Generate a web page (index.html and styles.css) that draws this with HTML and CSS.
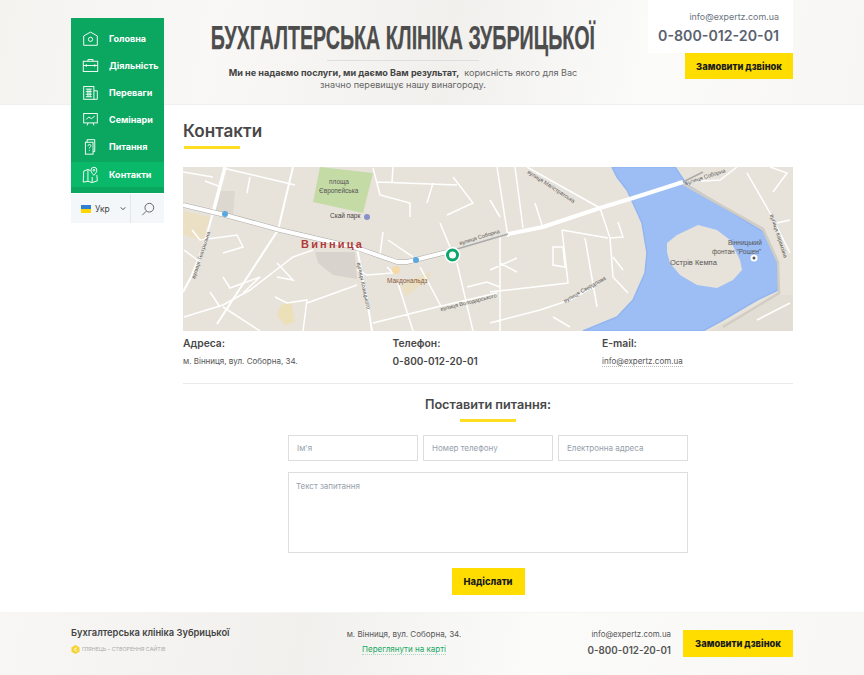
FILE: index.html
```html
<!DOCTYPE html>
<html lang="uk">
<head>
  <meta charset="UTF-8">
  <meta name="viewport" content="width=device-width, initial-scale=1.0">
  <title>Бухгалтерська клініка Зубрицької</title>
  <link rel="stylesheet" href="styles.css">
</head>
<body>
  <!-- Header -->
  <header class="site-header">
    <div class="wrap header-row">
      <div class="brand">
        <div class="brand-title"><span class="brand-name">Бухгалтерська клініка Зубрицької</span></div>
        <div class="brand-line"></div>
        <p class="brand-text"><b>Ми не надаємо послуги, ми даємо Вам результат,</b>&nbsp; корисність якого для Вас<br>значно перевищує нашу винагороду.</p>
      </div>
      <div class="header-contact">
        <div class="contact-box">
          <a class="contact-mail">info@expertz.com.ua</a>
          <div class="contact-phone">0-800-012-20-01</div>
        </div>
        <a class="btn btn-call">Замовити дзвінок</a>
      </div>
    </div>
  </header>

  <div class="wrap page">
    <!-- Side menu -->
    <aside class="sidebar">
      <nav class="side-nav">
        <a class="nav-item">
          <svg class="nav-icon" viewBox="0 0 20 20"><path d="M2 7 10 2.500 18 7V18H2z"/><circle cx="10" cy="11" r="2.500"/></svg>
          Головна
        </a>
        <a class="nav-item">
          <svg class="nav-icon" viewBox="0 0 20 20"><rect x="1.500" y="5" width="17" height="12"/><path d="M7 5V3h6v2M1.500 10h17M5 8.500v3M15 8.500v3"/></svg>
          Діяльність
        </a>
        <a class="nav-item">
          <svg class="nav-icon" viewBox="0 0 20 20"><rect x="2" y="3" width="12" height="15"/><path d="M14 8h4v10h-4M4.500 6h7M4.500 9h7M4.500 12h7M4.500 15h7M7 6v9M9.500 6v9"/></svg>
          Переваги
        </a>
        <a class="nav-item">
          <svg class="nav-icon" viewBox="0 0 20 20"><rect x="2" y="3" width="16" height="11"/><path d="M5 10l3-3 3 2 4-3M6 17l1-3M14 17l-1-3"/></svg>
          Семінари
        </a>
        <a class="nav-item">
          <svg class="nav-icon" viewBox="0 0 20 20"><path d="M6 5V2h9v14h-2"/><rect x="4" y="5" width="9" height="14"/><path d="M7 9.500c0-2.500 3.500-2.500 3.500-.5 0 1.500-1.800 1.500-1.800 3.200M8.700 14v1"/></svg>
          Питання
        </a>
        <a class="nav-item active">
          <svg class="nav-icon" viewBox="0 0 20 20"><path d="M2 6l5-2 3 1.500M7 4v14M2 6l-.5 13L7 18l5 1.500 6-2-.5-7M12 13v6.500"/><path d="M14 11s-3.500-3.500-3.500-6a3.500 3.500 0 0 1 7 0c0 2.500-3.500 6-3.500 6z"/><circle cx="14" cy="5" r="1"/></svg>
          Контакти
        </a>
      </nav>
      <div class="side-tools">
        <div class="lang">
          <span class="flag"></span>
          Укр
          <svg class="lang-arrow" viewBox="0 0 8 6"><path d="M1 1.500 4 4.500 7 1.500"/></svg>
        </div>
        <div class="search">
          <svg class="search-icon" viewBox="0 0 16 16"><circle cx="9.500" cy="6.500" r="5"/><path d="M6 10.500 1.500 15"/></svg>
        </div>
      </div>
    </aside>

    <!-- Main content -->
    <main class="content">
      <h1 class="page-title">Контакти</h1>

      <svg class="map" viewBox="0 0 610 164" preserveAspectRatio="none">
        <rect width="610" height="164" fill="#e8e3da"/>
        <polygon points="137,0 190,6 180,46 130,35" fill="#c5dba6"/>
        <polygon points="0,44 27,50 20,74 0,68" fill="#ebe0c3"/>
        <polygon points="36,24 52,24 50,50 32,46" fill="#dcd8d0"/>
        <polygon points="132,85 172,85 174,112 150,108 135,96" fill="#d8d4cd"/>
        <polygon points="98,138 108,135 112,155 102,158 94,148" fill="#ebe0b8"/>
        <polygon points="218,118 248,104 246,112 222,130" fill="#ebe0c3"/>
        <polygon class="water" points="429,0 492,0 504,18 534,36 582,66 594,93 595,123 574,133 540,153 520,164 400,164 434,150 450,133 462,106 464,86 459,56 450,36 444,23 434,10"/>
        <polygon points="484,76 494,68 515,58 534,63 547,73 557,93 559,103 550,113 534,121 514,118 497,108 487,96 484,85" fill="#e8e3da"/>
        <polygon points="526,164 595,128 610,128 610,164" fill="#e3ded5"/>
        <path class="road-edge" d="M495 14 534 36 580 62 595 95 596 126 540 160"/>
        <path class="road road-wide" d="M42 0 30 46"/>
        <path class="road" d="M30 46 20 80 8 110 0 125M110 0 95 63 67 106 34 157M174 81 184 133 189 164"/>
        <path class="road road-small" d="M0 5 30 10M22 14 38 20M40 1 112 18M67 10 64 26M190 1 197 28 227 36 227 50M210 0 209 16M194 15 274 18M270 10 290 36 264 48M250 16 244 36M257 56 267 80M274 96 290 164M205 73 230 90M200 65 197 88M174 103 184 108 210 106 204 100M214 113 230 164M237 100 260 143M124 136 174 118M1 150 40 138 67 123 97 100 110 90 130 83M94 96 110 113 94 110M92 130 104 136 124 133 120 164M40 110 47 121 77 110 60 126M27 125 37 140M9 63 17 73 54 68 60 80 40 86M1 83 17 95M190 156 254 140 314 126M40 140 77 164M284 120 304 115 317 120"/>
        <path class="road road-small" d="M314 0 325 70M332 0 340 61M352 36 359 58M307 33 317 50M417 41 427 71 440 70 435 55M379 63 425 71M379 63 385 116 307 125M402 71 414 140M427 71 430 110 445 126M430 90 440 103M370 80 380 80 382 100 370 98zM307 103 334 91M317 96 334 105M317 70 317 164M307 156 357 143 387 133 410 120M370 150 387 160M344 0 417 41M554 0 537 13 504 15M564 6 587 46 607 86M587 0 604 6 590 25M594 56 607 53M574 153 607 136"/>
        <path class="road-main-edge" d="M0 38 42 48 97 63 174 81 214 95 224 95 264 85"/>
        <path class="road-main" d="M0 38 42 48 97 63 174 81 214 95 224 95 264 85"/>
        <path class="road-thin" d="M264 85 325 67"/>
        <path class="road-main" d="M325 67 360 60 417 41 450 31 500 15"/>
        <path class="road-thin" d="M500 15 520 5"/>
        <circle cx="42" cy="47" r="3" fill="#5aa8e0"/>
        <circle cx="233" cy="93" r="3" fill="#5aa8e0"/>
        <circle cx="184" cy="50" r="3" fill="#8890c8"/>
        <circle cx="213" cy="103" r="4" fill="#f5d9a8"/>
        <circle cx="571" cy="91" r="3.500" fill="#fff"/>
        <circle cx="571" cy="91" r="1.500" fill="#555"/>
        <text class="map-label" x="146" y="17">площа</text>
        <text class="map-label" x="136" y="26">Європейська</text>
        <text class="map-label dark" x="147" y="51">Скай парк</text>
        <text class="map-city" x="118" y="81">Винница</text>
        <text class="map-label brown" x="204" y="116">Макдональдз</text>
        <text class="map-label small" transform="translate(12 112) rotate(-72)">вулиця Театральна</text>
        <text class="map-label small" transform="translate(174 96) rotate(78)">вулиця Козицького</text>
        <text class="map-label small" transform="translate(258 144) rotate(-14)">вулиця Володарського</text>
        <text class="map-label small" transform="translate(277 78) rotate(-17)">вулиця Соборна</text>
        <text class="map-label small" transform="translate(344 6) rotate(33)">вулиця Магістратська</text>
        <text class="map-label small" transform="translate(382 136) rotate(-30)">вулиця Свердлова</text>
        <text class="map-label small" transform="translate(503 18) rotate(-18)">вулиця Соборна</text>
        <text class="map-label small" transform="translate(587 48) rotate(72)">вулиця Карамзіна</text>
        <text class="map-label big" x="487" y="98">Острів Кемпа</text>
        <text class="map-label" x="545" y="78">Вінницький</text>
        <text class="map-label" x="529" y="87">фонтан "Рошен"</text>
        <circle class="map-halo" cx="269.500" cy="88" r="8"/>
        <circle class="map-pin" cx="269.500" cy="88" r="5"/>
      </svg>

      <div class="info-row">
        <div class="info-col">
          <div class="info-label">Адреса:</div>
          <div class="info-text">м. Вінниця, вул. Соборна, 34.</div>
        </div>
        <div class="info-col">
          <div class="info-label">Телефон:</div>
          <div class="info-phone">0-800-012-20-01</div>
        </div>
        <div class="info-col">
          <div class="info-label">E-mail:</div>
          <div class="info-text"><a class="info-mail">info@expertz.com.ua</a></div>
        </div>
      </div>

      <form class="ask-form">
        <h2 class="form-title">Поставити питання:</h2>
        <div class="form-fields">
          <div class="field-row">
            <input class="field" placeholder="Ім'я">
            <input class="field" placeholder="Номер телефону">
            <input class="field" placeholder="Електронна адреса">
          </div>
          <textarea class="field field-area" placeholder="Текст запитання"></textarea>
        </div>
        <a class="btn btn-send">Надіслати</a>
      </form>
    </main>
  </div>

  <!-- Footer -->
  <footer class="site-footer">
    <div class="wrap footer-row">
      <div class="footer-brand">
        <div class="footer-name">Бухгалтерська клініка Зубрицької</div>
        <div class="footer-dev">
          <svg class="dev-icon" viewBox="0 0 10 10"><path d="M5 0 9.500 2.500V7.500L5 10 .5 7.500V2.500z"/><path class="dev-mark" d="M6.500 3 3.500 5 6.500 7"/></svg>
          ГЛЯНЕЦЬ – СТВОРЕННЯ САЙТІВ
        </div>
      </div>
      <div class="footer-address">
        <div>м. Вінниця, вул. Соборна, 34.</div>
        <a class="footer-link">Переглянути на карті</a>
      </div>
      <div class="footer-contact">
        <a class="footer-mail">info@expertz.com.ua</a>
        <div class="footer-phone">0-800-012-20-01</div>
      </div>
      <a class="btn btn-footer">Замовити дзвінок</a>
    </div>
  </footer>
</body>
</html>
```

FILE: styles.css
```css
body {
  margin: 0;
  background: #fff;
  color: #444;
  font-family: "Inter", "Liberation Sans", sans-serif;
  font-size: 10px;
}

.wrap {
  width: 722px;
  margin-left: 71px;
}

.btn {
  display: flex;
  align-items: center;
  justify-content: center;
  background: #ffdd00;
  color: #1a1a1a;
  font-weight: 800;
}

/* Header */
.site-header {
  height: 105px;
  background: linear-gradient(100deg, #f4f3f0 0%, #f9f8f6 25%, #f1f0ed 52%, #fbfbfa 75%, #f7f6f4 100%);
  border-bottom: 1px solid #f0f0f0;
  box-sizing: border-box;
}

.header-row {
  display: flex;
}

.brand {
  width: 490px;
  margin-left: 87px;
  text-align: center;
}

.brand-title {
  display: flex;
  justify-content: center;
  margin-top: 18px;
  font-family: "Liberation Sans", sans-serif;
  font-size: 34px;
  line-height: 38px;
  font-weight: 700;
  text-transform: uppercase;
  white-space: nowrap;
  color: #4d4d4d;
}

.brand-name {
  flex: none;
  transform: scaleX(0.579);
  -webkit-text-stroke: 0.25px #4d4d4d;
}

.brand-line {
  width: 152px;
  height: 1px;
  margin: 4px auto 0;
  background: #dedede;
}

.brand-text {
  margin: 6px 0 0;
  font-size: 9.100px;
  line-height: 12px;
  color: #666;
}

.brand-text b {
  color: #444;
}

.header-contact {
  width: 145px;
  display: flex;
  flex-direction: column;
  align-items: flex-end;
}

.contact-box {
  width: 145px;
  height: 53px;
  box-sizing: border-box;
  padding: 10px 14px 0 0;
  background: #fff;
  text-align: right;
}

.contact-mail {
  font-size: 8.900px;
  line-height: 12px;
  color: #6b7480;
}

.contact-phone {
  margin-top: 3px;
  font-size: 14.200px;
  line-height: 20px;
  font-weight: 600;
  color: #5a626e;
}

.btn-call {
  width: 108px;
  height: 26px;
  font-size: 9.300px;
}

/* Page */
.page {
  position: relative;
  padding-left: 112px;
  box-sizing: border-box;
}

.sidebar {
  position: absolute;
  left: 0;
  top: -87px;
  width: 93px;
}

.side-nav {
  display: flex;
  flex-direction: column;
  background: #0ba660;
  padding: 7px 0 6px;
}

.nav-item {
  height: 27px;
  display: flex;
  align-items: center;
  padding-left: 11px;
  color: #fff;
  font-size: 9px;
  font-weight: 700;
}

.nav-item.active {
  background: #09b969;
  height: 25px;
  margin-top: 2px;
}

.nav-icon {
  width: 17px;
  height: 17px;
  margin-right: 10px;
  fill: none;
  stroke: #fff;
  stroke-width: 1.100;
}

.side-tools {
  display: flex;
  height: 29px;
  margin-top: 1px;
  background: #f4f7fa;
}

.lang {
  width: 60px;
  display: flex;
  align-items: center;
  padding-left: 10px;
  box-sizing: border-box;
  border-right: 1px solid #e3e6ea;
  font-size: 8.500px;
  color: #444;
}

.flag {
  width: 10px;
  height: 8px;
  margin-right: 4px;
  background: linear-gradient(#2f7fd6 50%, #ffd500 50%);
}

.lang-arrow {
  width: 6px;
  height: 5px;
  margin-left: 10px;
  fill: none;
  stroke: #444;
  stroke-width: 1.300;
}

.search {
  flex: 1;
  display: flex;
  align-items: center;
  justify-content: center;
}

.search-icon {
  width: 14px;
  height: 14px;
  fill: none;
  stroke: #555;
  stroke-width: 1;
}

/* Content */
.content {
  padding-top: 15px;
}

.page-title {
  margin: 0;
  font-size: 17.100px;
  line-height: 22px;
  font-weight: 600;
  color: #484848;
}

.page-title::after {
  content: "";
  display: block;
  width: 56px;
  height: 3px;
  margin: 4px 0 0 1px;
  background: #ffdd22;
}

.map {
  display: block;
  width: 610px;
  height: 164px;
  margin-top: 18px;
}

.water {
  fill: #9dbef5;
  stroke: #92b5f0;
  stroke-width: 1.500;
}

.road {
  fill: none;
  stroke: #fff;
  stroke-width: 2;
}

.road-wide {
  stroke-width: 3.500;
}

.road-small {
  stroke-width: 1.500;
}

.road-edge {
  fill: none;
  stroke: #d2cdc3;
  stroke-width: 2.500;
}

.road-thin {
  fill: none;
  stroke: #aaa;
  stroke-width: 1.500;
}

.road-main-edge {
  fill: none;
  stroke: #aaa;
  stroke-width: 5;
}

.road-main {
  fill: none;
  stroke: #fff;
  stroke-width: 4;
}

.map-label {
  font-family: "Liberation Sans", sans-serif;
  font-size: 6.500px;
  fill: #555;
}

.map-label.small {
  font-size: 5.500px;
}

.map-label.big {
  font-size: 7.500px;
}

.map-label.dark {
  fill: #444;
}

.map-label.brown {
  fill: #8a5a3c;
}

.map-city {
  font-family: "Liberation Sans", sans-serif;
  font-size: 11px;
  font-weight: 700;
  letter-spacing: 2.200px;
  fill: #b03a3a;
}

.map-halo {
  fill: #fff;
}

.map-pin {
  fill: #fff;
  stroke: #0ba66a;
  stroke-width: 3;
}

.info-row {
  display: flex;
  padding: 5px 0 13px;
  border-bottom: 1px solid #eaeaea;
}

.info-col {
  flex: 0 0 209.500px;
}

.info-col:last-child {
  flex: 1;
}

.info-label {
  font-size: 10.300px;
  line-height: 15px;
  font-weight: 600;
  color: #484848;
}

.info-text {
  margin-top: 1px;
  height: 18px;
  font-size: 8px;
  line-height: 18px;
  color: #555;
}

.info-phone {
  margin-top: 1px;
  height: 18px;
  font-size: 10px;
  line-height: 18px;
  font-weight: 600;
  color: #484848;
}

.info-mail {
  border-bottom: 1px dotted #bbb;
}

.ask-form {
  display: flex;
  flex-direction: column;
  align-items: center;
}

.form-title {
  margin: 12px 0 0;
  font-size: 12.700px;
  line-height: 18px;
  font-weight: 600;
  color: #484848;
}

.form-title::after {
  content: "";
  display: block;
  width: 56px;
  height: 3px;
  margin: 5px auto 0;
  background: #ffdd22;
}

.form-fields {
  width: 400px;
  margin-top: 13px;
}

.field-row {
  display: flex;
  gap: 5px;
}

.field {
  display: block;
  box-sizing: border-box;
  width: 130px;
  height: 26px;
  padding: 0 8px;
  border: 1px solid #dedede;
  border-radius: 0;
  outline: none;
  background: #fff;
  font-family: "Inter", "Liberation Sans", sans-serif;
  font-size: 8px;
}

.field::placeholder {
  color: #96a0ac;
}

.field-area {
  width: 400px;
  height: 81px;
  margin-top: 11px;
  padding: 8px 7px;
  resize: none;
}

.btn-send {
  width: 73px;
  height: 27px;
  margin-top: 15px;
  font-size: 9.300px;
}

/* Footer */
.site-footer {
  height: 63px;
  margin-top: 17px;
  background: linear-gradient(100deg, #f8f7f5 0%, #f1f0ed 35%, #fbfbfa 62%, #f8f7f6 100%);
  border-top: 1px solid #f5f5f5;
  box-sizing: border-box;
}

.footer-row {
  display: flex;
  padding-top: 14px;
}

.footer-brand {
  width: 223px;
}

.footer-name {
  font-size: 9.300px;
  line-height: 12px;
  font-weight: 600;
  color: #444;
}

.footer-dev {
  display: flex;
  align-items: center;
  margin-top: 5px;
  font-size: 5.300px;
  line-height: 10px;
  color: #aaa;
}

.dev-icon {
  width: 9px;
  height: 9px;
  margin-right: 2px;
  fill: #f5d43a;
}

.dev-mark {
  fill: none;
  stroke: #fff;
  stroke-width: 1;
}

.footer-address {
  width: 220px;
  text-align: center;
  font-size: 8px;
  line-height: 15px;
  color: #555;
}

.footer-link {
  color: #18a862;
  border-bottom: 1px dotted #a8d8be;
}

.footer-contact {
  width: 159px;
  margin-left: -2px;
  text-align: right;
  color: #555;
}

.footer-mail {
  font-size: 7.900px;
  line-height: 12px;
}

.footer-phone {
  margin-top: 4px;
  font-size: 9.800px;
  line-height: 14px;
  font-weight: 600;
}

.btn-footer {
  width: 110px;
  height: 27px;
  margin-left: 12px;
  margin-top: 3px;
  font-size: 9.300px;
}
```
